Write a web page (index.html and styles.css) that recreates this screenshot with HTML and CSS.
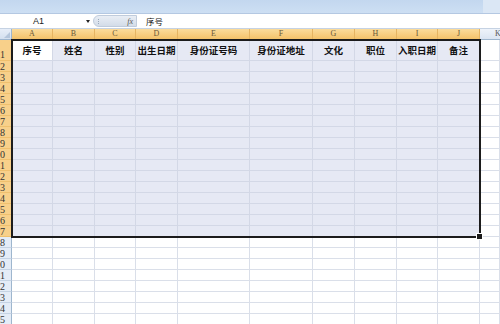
FILE: index.html
```html
<!DOCTYPE html>
<html>
<head>
    <meta charset="UTF-8">
    <title>员工信息表</title>
    <link rel="stylesheet" href="styles.css">
</head>
<body>
    <div class="ribbon"><div class="ribbon-end"></div></div>

    <div class="formula-bar">
        <div class="name-box"><span class="cell-ref">A1</span><span class="arrow"></span></div>
        <div class="fx-pill"><span class="grip"></span><span class="fx">fx</span></div>
        <div class="formula-input">序号</div>
    </div>

    <div class="sheet">
        <div class="row col-heads">
            <div class="corner"><span class="corner-mark"></span></div>
            <div class="col-head sel">A</div>
            <div class="col-head sel">B</div>
            <div class="col-head sel">C</div>
            <div class="col-head sel">D</div>
            <div class="col-head sel">E</div>
            <div class="col-head sel">F</div>
            <div class="col-head sel">G</div>
            <div class="col-head sel">H</div>
            <div class="col-head sel">I</div>
            <div class="col-head sel">J</div>
            <div class="col-head cut">K</div>
        </div>

        <div class="row first">
            <div class="row-head sel"><span>1</span></div>
            <div class="cell label active">序号</div>
            <div class="cell label sel">姓名</div>
            <div class="cell label sel">性别</div>
            <div class="cell label sel">出生日期</div>
            <div class="cell label sel">身份证号码</div>
            <div class="cell label sel">身份证地址</div>
            <div class="cell label sel">文化</div>
            <div class="cell label sel">职位</div>
            <div class="cell label sel">入职日期</div>
            <div class="cell label sel">备注</div>
            <div class="cell"></div>
        </div>

        <!-- 选中区域 2-17 行 -->
        <div class="row"><div class="row-head sel"><span>2</span></div><div class="cell sel"></div><div class="cell sel"></div><div class="cell sel"></div><div class="cell sel"></div><div class="cell sel"></div><div class="cell sel"></div><div class="cell sel"></div><div class="cell sel"></div><div class="cell sel"></div><div class="cell sel"></div><div class="cell"></div></div>
        <div class="row"><div class="row-head sel"><span>3</span></div><div class="cell sel"></div><div class="cell sel"></div><div class="cell sel"></div><div class="cell sel"></div><div class="cell sel"></div><div class="cell sel"></div><div class="cell sel"></div><div class="cell sel"></div><div class="cell sel"></div><div class="cell sel"></div><div class="cell"></div></div>
        <div class="row"><div class="row-head sel"><span>4</span></div><div class="cell sel"></div><div class="cell sel"></div><div class="cell sel"></div><div class="cell sel"></div><div class="cell sel"></div><div class="cell sel"></div><div class="cell sel"></div><div class="cell sel"></div><div class="cell sel"></div><div class="cell sel"></div><div class="cell"></div></div>
        <div class="row"><div class="row-head sel"><span>5</span></div><div class="cell sel"></div><div class="cell sel"></div><div class="cell sel"></div><div class="cell sel"></div><div class="cell sel"></div><div class="cell sel"></div><div class="cell sel"></div><div class="cell sel"></div><div class="cell sel"></div><div class="cell sel"></div><div class="cell"></div></div>
        <div class="row"><div class="row-head sel"><span>6</span></div><div class="cell sel"></div><div class="cell sel"></div><div class="cell sel"></div><div class="cell sel"></div><div class="cell sel"></div><div class="cell sel"></div><div class="cell sel"></div><div class="cell sel"></div><div class="cell sel"></div><div class="cell sel"></div><div class="cell"></div></div>
        <div class="row"><div class="row-head sel"><span>7</span></div><div class="cell sel"></div><div class="cell sel"></div><div class="cell sel"></div><div class="cell sel"></div><div class="cell sel"></div><div class="cell sel"></div><div class="cell sel"></div><div class="cell sel"></div><div class="cell sel"></div><div class="cell sel"></div><div class="cell"></div></div>
        <div class="row"><div class="row-head sel"><span>8</span></div><div class="cell sel"></div><div class="cell sel"></div><div class="cell sel"></div><div class="cell sel"></div><div class="cell sel"></div><div class="cell sel"></div><div class="cell sel"></div><div class="cell sel"></div><div class="cell sel"></div><div class="cell sel"></div><div class="cell"></div></div>
        <div class="row"><div class="row-head sel"><span>9</span></div><div class="cell sel"></div><div class="cell sel"></div><div class="cell sel"></div><div class="cell sel"></div><div class="cell sel"></div><div class="cell sel"></div><div class="cell sel"></div><div class="cell sel"></div><div class="cell sel"></div><div class="cell sel"></div><div class="cell"></div></div>
        <div class="row"><div class="row-head sel"><span>10</span></div><div class="cell sel"></div><div class="cell sel"></div><div class="cell sel"></div><div class="cell sel"></div><div class="cell sel"></div><div class="cell sel"></div><div class="cell sel"></div><div class="cell sel"></div><div class="cell sel"></div><div class="cell sel"></div><div class="cell"></div></div>
        <div class="row"><div class="row-head sel"><span>11</span></div><div class="cell sel"></div><div class="cell sel"></div><div class="cell sel"></div><div class="cell sel"></div><div class="cell sel"></div><div class="cell sel"></div><div class="cell sel"></div><div class="cell sel"></div><div class="cell sel"></div><div class="cell sel"></div><div class="cell"></div></div>
        <div class="row"><div class="row-head sel"><span>12</span></div><div class="cell sel"></div><div class="cell sel"></div><div class="cell sel"></div><div class="cell sel"></div><div class="cell sel"></div><div class="cell sel"></div><div class="cell sel"></div><div class="cell sel"></div><div class="cell sel"></div><div class="cell sel"></div><div class="cell"></div></div>
        <div class="row"><div class="row-head sel"><span>13</span></div><div class="cell sel"></div><div class="cell sel"></div><div class="cell sel"></div><div class="cell sel"></div><div class="cell sel"></div><div class="cell sel"></div><div class="cell sel"></div><div class="cell sel"></div><div class="cell sel"></div><div class="cell sel"></div><div class="cell"></div></div>
        <div class="row"><div class="row-head sel"><span>14</span></div><div class="cell sel"></div><div class="cell sel"></div><div class="cell sel"></div><div class="cell sel"></div><div class="cell sel"></div><div class="cell sel"></div><div class="cell sel"></div><div class="cell sel"></div><div class="cell sel"></div><div class="cell sel"></div><div class="cell"></div></div>
        <div class="row"><div class="row-head sel"><span>15</span></div><div class="cell sel"></div><div class="cell sel"></div><div class="cell sel"></div><div class="cell sel"></div><div class="cell sel"></div><div class="cell sel"></div><div class="cell sel"></div><div class="cell sel"></div><div class="cell sel"></div><div class="cell sel"></div><div class="cell"></div></div>
        <div class="row"><div class="row-head sel"><span>16</span></div><div class="cell sel"></div><div class="cell sel"></div><div class="cell sel"></div><div class="cell sel"></div><div class="cell sel"></div><div class="cell sel"></div><div class="cell sel"></div><div class="cell sel"></div><div class="cell sel"></div><div class="cell sel"></div><div class="cell"></div></div>
        <div class="row"><div class="row-head sel"><span>17</span></div><div class="cell sel"></div><div class="cell sel"></div><div class="cell sel"></div><div class="cell sel"></div><div class="cell sel"></div><div class="cell sel"></div><div class="cell sel"></div><div class="cell sel"></div><div class="cell sel"></div><div class="cell sel"></div><div class="cell"></div></div>

        <!-- 空白行 -->
        <div class="row"><div class="row-head"><span>18</span></div><div class="cell"></div><div class="cell"></div><div class="cell"></div><div class="cell"></div><div class="cell"></div><div class="cell"></div><div class="cell"></div><div class="cell"></div><div class="cell"></div><div class="cell"></div><div class="cell"></div></div>
        <div class="row"><div class="row-head"><span>19</span></div><div class="cell"></div><div class="cell"></div><div class="cell"></div><div class="cell"></div><div class="cell"></div><div class="cell"></div><div class="cell"></div><div class="cell"></div><div class="cell"></div><div class="cell"></div><div class="cell"></div></div>
        <div class="row"><div class="row-head"><span>20</span></div><div class="cell"></div><div class="cell"></div><div class="cell"></div><div class="cell"></div><div class="cell"></div><div class="cell"></div><div class="cell"></div><div class="cell"></div><div class="cell"></div><div class="cell"></div><div class="cell"></div></div>
        <div class="row"><div class="row-head"><span>21</span></div><div class="cell"></div><div class="cell"></div><div class="cell"></div><div class="cell"></div><div class="cell"></div><div class="cell"></div><div class="cell"></div><div class="cell"></div><div class="cell"></div><div class="cell"></div><div class="cell"></div></div>
        <div class="row"><div class="row-head"><span>22</span></div><div class="cell"></div><div class="cell"></div><div class="cell"></div><div class="cell"></div><div class="cell"></div><div class="cell"></div><div class="cell"></div><div class="cell"></div><div class="cell"></div><div class="cell"></div><div class="cell"></div></div>
        <div class="row"><div class="row-head"><span>23</span></div><div class="cell"></div><div class="cell"></div><div class="cell"></div><div class="cell"></div><div class="cell"></div><div class="cell"></div><div class="cell"></div><div class="cell"></div><div class="cell"></div><div class="cell"></div><div class="cell"></div></div>
        <div class="row"><div class="row-head"><span>24</span></div><div class="cell"></div><div class="cell"></div><div class="cell"></div><div class="cell"></div><div class="cell"></div><div class="cell"></div><div class="cell"></div><div class="cell"></div><div class="cell"></div><div class="cell"></div><div class="cell"></div></div>
        <div class="row"><div class="row-head"><span>25</span></div><div class="cell"></div><div class="cell"></div><div class="cell"></div><div class="cell"></div><div class="cell"></div><div class="cell"></div><div class="cell"></div><div class="cell"></div><div class="cell"></div><div class="cell"></div><div class="cell"></div></div>

        <!-- 选区粗边框 -->
        <div class="selection"><span class="handle"></span></div>
    </div>
</body>
</html>
```

FILE: styles.css
```css
body {
    margin: 0;
    padding: 0;
    width: 500px;
    height: 324px;
    overflow: hidden;
    background-color: #ffffff;
    font-family: "Liberation Serif", serif;
}

/* 顶部功能区 */
.ribbon {
    height: 13px;
    background: linear-gradient(#c3d7ef, #cddff3);
    border-bottom: 1px solid #b4c8e2;
    display: flex;
    justify-content: flex-end;
}
.ribbon-end {
    width: 17px;
    background-color: #dbe7f5;
}

/* 编辑栏 */
.formula-bar {
    height: 14px;
    display: flex;
    background-color: #ffffff;
    border-bottom: 1px solid #c5d2e3;
}
.name-box {
    width: 93px;
    display: flex;
    align-items: center;
    justify-content: flex-end;
    gap: 42px;
    padding-right: 3px;
    box-sizing: border-box;
    font-family: "Liberation Sans", sans-serif;
    font-size: 9px;
    color: #222;
}
.arrow {
    width: 0;
    height: 0;
    border-left: 2px solid transparent;
    border-right: 2px solid transparent;
    border-top: 3px solid #222;
}
.fx-pill {
    width: 44px;
    margin: 1px 0;
    border-radius: 7px 0 0 7px;
    background: linear-gradient(#e9eef5, #d3dce8);
    border: 1px solid #c0ccdc;
    box-sizing: border-box;
    display: flex;
    align-items: center;
    justify-content: space-between;
    padding: 0 3px 0 4px;
}
.grip {
    width: 1px;
    height: 5px;
    border-left: 1px dotted #9aa8bb;
}
.fx {
    font-family: "Liberation Serif", serif;
    font-style: italic;
    font-size: 8px;
    color: #555;
}
.formula-input {
    flex: 1;
    padding-left: 9px;
    font-family: "Noto Sans CJK SC", sans-serif;
    font-size: 8.5px;
    line-height: 14px;
    color: #111;
}

/* 表格区域 */
.sheet {
    position: relative;
}
.row {
    display: grid;
    grid-template-columns: 12px 41px 42px 41px 42px 72px 63px 42px 42px 41px 42px 20px;
    height: 11px;
}
.row.first {
    height: 21px;
}
.col-heads {
    height: 11px;
}
.corner {
    background: linear-gradient(#e7eef8, #d4e0ef);
    border-right: 1px solid #9eb6ce;
    border-bottom: 1px solid #9eb6ce;
    box-sizing: border-box;
    display: flex;
    align-items: flex-end;
    justify-content: flex-end;
    padding: 0 1px 1px 0;
}
.corner-mark {
    width: 0;
    height: 0;
    border-left: 6px solid transparent;
    border-bottom: 6px solid #b5c6db;
}
.col-head {
    background: linear-gradient(#eef3fa, #dbe5f2);
    border-right: 1px solid #9eb6ce;
    border-bottom: 1px solid #9eb6ce;
    box-sizing: border-box;
    font-size: 8px;
    line-height: 10px;
    text-align: center;
    color: #555;
    overflow: hidden;
}
.col-head.cut {
    text-align: left;
    padding-left: 15px;
    border-right: none;
}
.col-head.sel {
    background: linear-gradient(#fbdc9c, #f4c26a);
    border-right: 1px solid #e5b462;
    border-bottom: 1px solid #e59a32;
    color: #6a5838;
}
.row-head {
    background-color: #e4ecf7;
    border-right: 1px solid #9eb6ce;
    border-bottom: 1px solid #c5d3e4;
    box-sizing: border-box;
    display: flex;
    justify-content: flex-end;
    align-items: center;
    padding-right: 6px;
    overflow: hidden;
    font-size: 10px;
    color: #333;
}
.row-head span {
    flex-shrink: 0;
    white-space: nowrap;
}
.row-head.sel {
    background-color: #f8d08a;
    border-right: 1px solid #e59a32;
    border-bottom: 1px solid #efc06e;
}
.row.first .row-head {
    align-items: flex-end;
}
.cell {
    border-right: 1px solid #dadfe9;
    border-bottom: 1px solid #dadfe9;
    box-sizing: border-box;
}
.cell.sel {
    background-color: #e6e9f4;
    border-color: #d3d8e6;
}
.cell.active {
    background-color: #ffffff;
    border-color: #d3d8e6;
}
.label {
    display: flex;
    align-items: flex-end;
    justify-content: center;
    padding-bottom: 4px;
    font-family: "Noto Sans CJK SC", sans-serif;
    font-weight: bold;
    font-size: 9.5px;
    line-height: 11px;
    color: #111;
    white-space: nowrap;
}

/* 选区边框 */
.selection {
    position: absolute;
    left: 11px;
    top: 10px;
    width: 470px;
    height: 199px;
    border: 2px solid #1c1c1c;
    box-sizing: border-box;
    pointer-events: none;
}
.handle {
    position: absolute;
    right: -4px;
    bottom: -4px;
    width: 5px;
    height: 5px;
    background-color: #1c1c1c;
    border: 1px solid #ffffff;
}
```
